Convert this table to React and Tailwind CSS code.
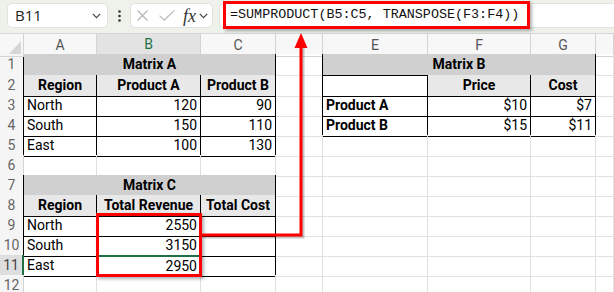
import React from 'react';

const COLS = 'grid grid-cols-[24px_73px_104px_75px_47px_105px_103px_65px_1fr]';
// D sits under the arrow head and H is cut off, so their letters are not shown
const LETTERS = ['A', 'B', 'C', '', 'E', 'F', 'G', ''];

// rows[r] = list of cells { c, span, t, k }
const rows = {
    1: [{ c: 1, span: 3, t: 'Matrix A', k: 'title' }, { c: 5, span: 3, t: 'Matrix B', k: 'title' }],
    2: [
        { c: 1, t: 'Region', k: 'head' }, { c: 2, t: 'Product A', k: 'head' }, { c: 3, t: 'Product B', k: 'head' },
        { c: 5, t: '', k: 'text' }, { c: 6, t: 'Price', k: 'head' }, { c: 7, t: 'Cost', k: 'head' },
    ],
    3: [
        { c: 1, t: 'North', k: 'text' }, { c: 2, t: '120', k: 'num' }, { c: 3, t: '90', k: 'num' },
        { c: 5, t: 'Product A', k: 'label' }, { c: 6, t: '$10', k: 'num' }, { c: 7, t: '$7', k: 'num' },
    ],
    4: [
        { c: 1, t: 'South', k: 'text' }, { c: 2, t: '150', k: 'num' }, { c: 3, t: '110', k: 'num' },
        { c: 5, t: 'Product B', k: 'label' }, { c: 6, t: '$15', k: 'num' }, { c: 7, t: '$11', k: 'num' },
    ],
    5: [{ c: 1, t: 'East', k: 'text' }, { c: 2, t: '100', k: 'num' }, { c: 3, t: '130', k: 'num' }],
    7: [{ c: 1, span: 3, t: 'Matrix C', k: 'title' }],
    8: [{ c: 1, t: 'Region', k: 'head' }, { c: 2, t: 'Total Revenue', k: 'head' }, { c: 3, t: 'Total Cost', k: 'head' }],
    9: [{ c: 1, t: 'North', k: 'text' }, { c: 2, t: '2550', k: 'num' }, { c: 3, t: '', k: 'text' }],
    10: [{ c: 1, t: 'South', k: 'text' }, { c: 2, t: '3150', k: 'num' }, { c: 3, t: '', k: 'text' }],
    11: [{ c: 1, t: 'East', k: 'text' }, { c: 2, t: '2950', k: 'num' }, { c: 3, t: '', k: 'text' }],
};

const boxed = (r, c) =>
    (r >= 1 && r <= 5 && c >= 1 && c <= 3) ||
    (r >= 1 && r <= 4 && c >= 5 && c <= 7) ||
    (r >= 7 && r <= 11 && c >= 1 && c <= 3);

const kindClass = {
    title: 'justify-center font-bold bg-[#d0d0d0]',
    head: 'justify-center font-bold bg-[#e8e8e8]',
    label: 'font-bold',
    num: 'justify-end',
    text: '',
};

const Chevron = ({ className }) => (
    <svg className={className} width="9" height="6" viewBox="0 0 9 6" fill="none">
        <path d="M0.8 0.8 L4.5 4.6 L8.2 0.8" stroke="#444" strokeWidth="1.2" />
    </svg>
);

const Row = ({ r }) => {
    const cells = rows[r] || [];
    const out = [];
    const selRow = r === 11;
    out.push(
        <div
            key="h"
            className={`flex items-center justify-center text-[14px] border-b border-b-[#e1e1e1] ${
                selRow
                    ? 'bg-[#dedede] text-[#444] border-r-2 border-r-[#1e7145]'
                    : `bg-[#f5f5f5] text-[#666] border-r ${boxed(r, 1) ? 'border-r-black' : 'border-r-[#d4d4d4]'}`
            }`}
        >
            {r}
        </div>
    );
    let c = 1;
    while (c <= 8) {
        const cell = cells.find((x) => x.c === c);
        const span = cell?.span || 1;
        const last = c + span - 1;
        const rightBlack = boxed(r, last) || boxed(r, last + 1);
        let bottomBlack = false;
        for (let k = c; k <= last; k++) if (boxed(r, k) || boxed(r + 1, k)) bottomBlack = true;
        const selTop = r === 11 && c === 2;
        out.push(
            <div
                key={c}
                className={`flex items-center px-[3px] overflow-hidden whitespace-nowrap border-r border-b ${
                    rightBlack ? 'border-r-black' : 'border-r-[#e1e1e1]'
                } ${bottomBlack ? 'border-b-black' : 'border-b-[#e1e1e1]'} ${
                    span === 3 ? 'col-span-3' : ''
                } ${cell ? kindClass[cell.k] : ''} ${selTop ? 'border-t-2 border-t-[#1e7145]' : ''}`}
            >
                {cell?.t}
            </div>
        );
        c += span;
    }
    return <div className={`${COLS} ${r === 1 ? 'h-[21px]' : 'h-[20px]'}`}>{out}</div>;
};

const App = () => {
    return (
        <div className="relative w-[614px] h-[292px] overflow-hidden bg-white text-black font-['Roboto',sans-serif] text-[14px]">
            {/* formula bar */}
            <div className="relative h-[34px] bg-[#eef2eb] border-b border-[#d6d6d6] flex items-start pt-[3px]">
                <div className="ml-[7px] w-[101px] h-[25px] rounded-[5px] bg-white border border-[#e2e2e2] flex items-center justify-between pl-[7px] pr-[6px]">
                    <span className="text-[15px] text-[#222] font-['Open_Sans',sans-serif]">B11</span>
                    <Chevron />
                </div>
                <div className="w-[22px] h-[25px] flex items-center justify-center">
                    <svg width="3" height="12" viewBox="0 0 3 12">
                        <circle cx="1.5" cy="1.5" r="1.3" fill="#333" />
                        <circle cx="1.5" cy="6" r="1.3" fill="#333" />
                        <circle cx="1.5" cy="10.5" r="1.3" fill="#333" />
                    </svg>
                </div>
                <div className="w-[83px] h-[25px] rounded-[5px] bg-white border border-[#e2e2e2] flex items-center pl-[6px]">
                    <svg width="11" height="11" viewBox="0 0 11 11" fill="none">
                        <path d="M0.5 0.5 L10.5 10.5 M10.5 0.5 L0.5 10.5" stroke="#b4b4b4" strokeWidth="1.1" />
                    </svg>
                    <svg className="ml-[11px]" width="16" height="11" viewBox="0 0 16 11" fill="none">
                        <path d="M0.6 5.6 L5.2 10.2 L15.4 0.4" stroke="#b4b4b4" strokeWidth="1.1" />
                    </svg>
                    <span className="ml-[8px] text-[18px] italic font-['Liberation_Serif',serif] text-[#333] leading-none">
                        fx
                    </span>
                    <Chevron className="ml-[3px]" />
                </div>
                <div className="ml-[6px] flex-1 h-[25px] rounded-l-[5px] bg-white border border-r-0 border-[#e2e2e2]" />
                <div className="absolute left-[223px] top-[1px] w-[307px] h-[28px] border-[3px] border-[#ff0000] bg-white flex items-center pl-[4px] shadow-[2px_2px_3px_rgba(0,0,0,0.3)]">
                    <span className="font-['Liberation_Mono',monospace] text-[13.4px] text-[#111] whitespace-nowrap">
                        =SUMPRODUCT(B5:C5, TRANSPOSE(F3:F4))
                    </span>
                </div>
            </div>

            {/* column headers */}
            <div className={`${COLS} h-[20px] bg-[#f7f7f7]`}>
                <div className="relative border-r border-b border-[#d4d4d4]">
                    <svg className="absolute right-[2px] bottom-[2px]" width="12" height="13" viewBox="0 0 12 13">
                        <path d="M12 0 L12 13 L0 13 Z" fill="#d6d6d6" />
                    </svg>
                </div>
                {LETTERS.map((l, i) =>
                    l === 'B' ? (
                        <div
                            key={i}
                            className="flex items-center justify-center text-[14px] text-[#1e7145] bg-[#e3e3e3] border-r border-r-[#d4d4d4] border-b-2 border-b-[#1e7145]"
                        >
                            {l}
                        </div>
                    ) : (
                        <div
                            key={i}
                            className="flex items-center justify-center text-[14px] text-[#555] border-r border-b border-[#d4d4d4]"
                        >
                            {l}
                        </div>
                    )
                )}
            </div>

            {[1, 2, 3, 4, 5, 6, 7, 8, 9, 10, 11, 12].map((r) => (
                <Row key={r} r={r} />
            ))}

            {/* highlight of B9:B11 */}
            <div className="absolute left-[96px] top-[213px] w-[106px] h-[64px] border-[3px] border-[#ff0000] shadow-[2px_2px_3px_rgba(0,0,0,0.3)]" />

            {/* arrow */}
            <svg className="absolute left-0 top-0 pointer-events-none" width="614" height="292" viewBox="0 0 614 292" fill="none">
                <path d="M303 48 L303 237 L203 237" stroke="rgba(0,0,0,0.22)" strokeWidth="3" />
                <path d="M301 46 L301 235 L201 235" stroke="#ff0000" strokeWidth="3" />
                <path d="M301 33 L307.5 48 L294.5 48 Z" fill="#ff0000" />
            </svg>
        </div>
    );
};

export default App;
